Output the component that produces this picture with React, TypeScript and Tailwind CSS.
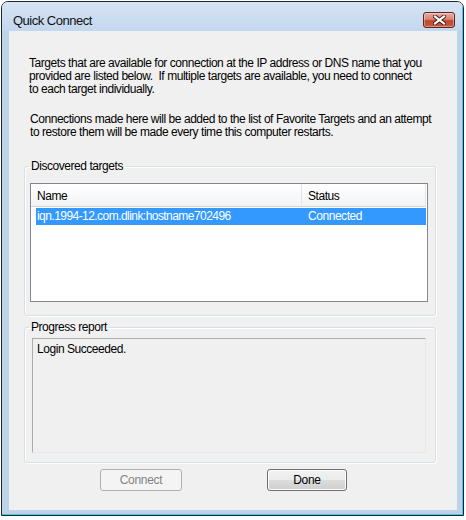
export default function App() {
  return (
    <div className="w-[466px] h-[520px] bg-white pl-[1px] pt-[1px] font-['Liberation_Sans',Arial,sans-serif] text-black">
      {/* Window */}
      <div className="w-[463px] h-[515px] border border-[#1c2530] rounded-t-[7px] overflow-hidden">
        <div className="h-full border-r border-b border-[#3ccbea] bg-[linear-gradient(to_bottom,#d6e4f4_0px,#c3d7ee_29px,#bcd3ea_29px,#bcd3ea_100%)] flex flex-col">
          {/* Title bar */}
          <div className="h-[29px] flex items-start pl-[11px] pr-[7px]">
            <span className="mt-[11px] text-[13px] leading-[16px] tracking-[-0.5px] text-[#101010]">Quick Connect</span>
            <div className="ml-auto mt-[10px] w-[32px] h-[16px] rounded-[3px] border border-[#5c2722] bg-[linear-gradient(to_bottom,#e8aa9e_0%,#d98574_45%,#c3452f_55%,#c85a3f_100%)] flex items-center justify-center shadow-[inset_0_0_0_1px_rgba(255,255,255,0.35)]">
              <svg width="13" height="10" viewBox="0 0 13 10">
                <path d="M2 1.5 L11 8.5 M11 1.5 L2 8.5" stroke="#3a1b18" strokeWidth="4" strokeLinecap="square" />
                <path d="M2 1.5 L11 8.5 M11 1.5 L2 8.5" stroke="#ffffff" strokeWidth="2.2" strokeLinecap="square" />
              </svg>
            </div>
          </div>

          {/* Frame + content */}
          <div className="flex pl-[7px]">
            <div className="w-[448px] h-[479px] bg-[#f0f0f0] flex flex-col text-[12px] leading-[13px] tracking-[-0.45px]">
              <div className="pl-[20px] pt-[26px]">
                <div>Targets that are available for connection at the IP address or DNS name that you</div>
                <div>provided are listed below.&nbsp; If multiple targets are available, you need to connect</div>
                <div>to each target individually.</div>
              </div>
              <div className="pl-[21px] mt-[17px]">
                <div>Connections made here will be added to the list of Favorite Targets and an attempt</div>
                <div>to restore them will be made every time this computer restarts.</div>
              </div>

              {/* Discovered targets */}
              <fieldset className="ml-[15px] mt-[21px] w-[412px] border border-[#d5dfe5] rounded-[3px] shadow-[inset_1px_1px_0_#ffffff,1px_1px_0_#ffffff] pb-[13px]">
                <legend className="ml-[4px] px-[2px] leading-[13px]">Discovered targets</legend>
                <div className="ml-[5px] mt-[10px] w-[398px] h-[119px] border border-[#828790] bg-white flex flex-col">
                  <div className="h-[23px] flex bg-[linear-gradient(to_bottom,#ffffff,#f3f4f6)] border-b border-[#d5d5d5] mr-[1px]">
                    <div className="w-[271px] pl-[6px] pt-[6px] border-r border-[#e3e5e7]">Name</div>
                    <div className="flex-1 pl-[6px] pt-[6px] border-r border-[#e3e5e7]">Status</div>
                  </div>
                  <div className="h-[17px] mt-[1px] ml-[5px] mr-[1px] bg-[#3399ff] text-white flex items-center">
                    <div className="w-[266px] pl-[1px] tracking-[-0.55px]">iqn.1994-12.com.dlink:hostname702496</div>
                    <div className="pl-[6px]">Connected</div>
                  </div>
                </div>
              </fieldset>

              {/* Progress report */}
              <fieldset className="ml-[15px] mt-[5px] w-[412px] border border-[#d5dfe5] rounded-[3px] shadow-[inset_1px_1px_0_#ffffff,1px_1px_0_#ffffff] pb-[9px]">
                <legend className="ml-[4px] px-[2px] leading-[13px]">Progress report</legend>
                <div className="ml-[7px] mt-[4px] w-[394px] h-[115px] border border-[#abadb3] border-r-[#e3e9ef] border-b-[#e3e9ef] bg-[#f0f0f0] pl-[4px] pt-[4px]">
                  Login Succeeded.
                </div>
              </fieldset>

              {/* Buttons */}
              <div className="flex mt-[6px] pl-[91px] gap-[85px]">
                <button className="w-[82px] h-[22px] rounded-[3px] border border-[#adb2b5] bg-[#f4f4f4] text-[#838383] text-[12px] tracking-[-0.3px]">
                  Connect
                </button>
                <button className="w-[80px] h-[22px] rounded-[3px] border border-[#707070] bg-[linear-gradient(to_bottom,#f2f2f2_0%,#ebebeb_50%,#dddddd_50%,#cfcfcf_100%)] shadow-[inset_0_0_0_1px_#fcfcfc] text-black text-[12px] tracking-[-0.3px]">
                  Done
                </button>
              </div>
            </div>
          </div>
        </div>
      </div>
    </div>
  );
}
